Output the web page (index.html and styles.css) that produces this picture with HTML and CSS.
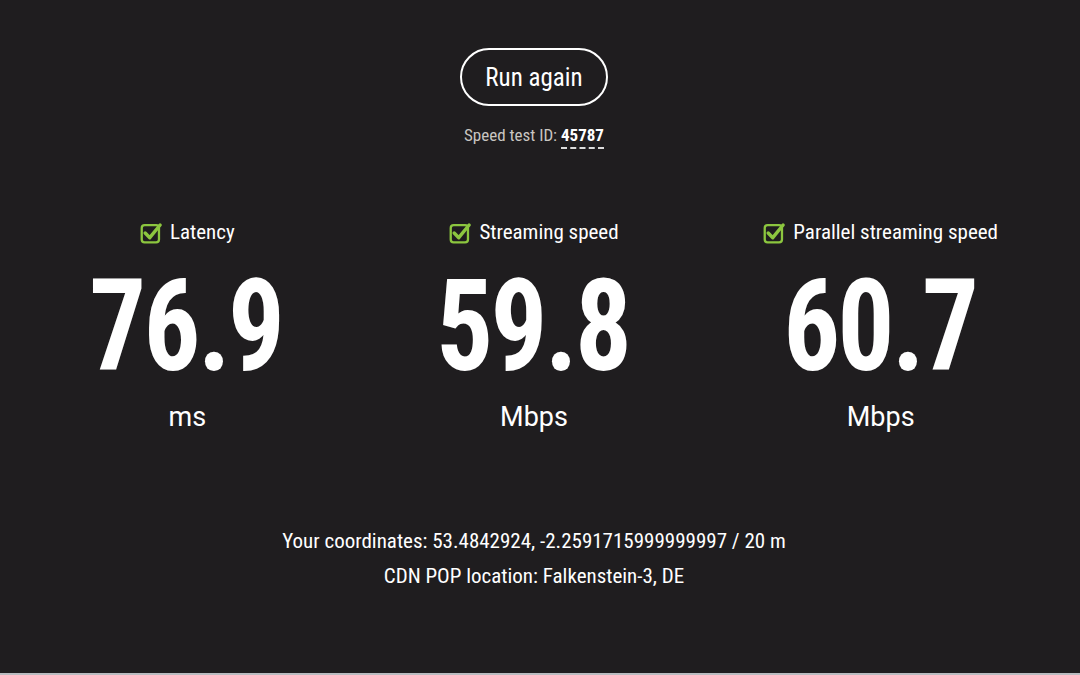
FILE: index.html
```html
<!DOCTYPE html>
<html>
<head>
<meta charset="utf-8">
<link rel="stylesheet" href="styles.css">
</head>
<body>
<main class="page">
  <section class="top">
    <button class="run-btn">Run again</button>
    <p class="test-id">Speed test ID: <span class="id-num">45787</span></p>
  </section>
  <section class="results">
    <div class="metric">
      <div class="label"><svg class="check" viewBox="0 0 20 20"><rect x="1.5" y="3.5" width="15" height="15" rx="2.5" fill="none" stroke="#8cc63f" stroke-width="2"/><path d="M4.5 10.5 L8.5 14.5 L17.5 3.5" fill="none" stroke="#8cc63f" stroke-width="3" stroke-linecap="round" stroke-linejoin="round"/></svg>Latency</div>
      <div class="value">76.9</div>
      <div class="unit">ms</div>
    </div>
    <div class="metric">
      <div class="label"><svg class="check" viewBox="0 0 20 20"><rect x="1.5" y="3.5" width="15" height="15" rx="2.5" fill="none" stroke="#8cc63f" stroke-width="2"/><path d="M4.5 10.5 L8.5 14.5 L17.5 3.5" fill="none" stroke="#8cc63f" stroke-width="3" stroke-linecap="round" stroke-linejoin="round"/></svg>Streaming speed</div>
      <div class="value">59.8</div>
      <div class="unit">Mbps</div>
    </div>
    <div class="metric">
      <div class="label"><svg class="check" viewBox="0 0 20 20"><rect x="1.5" y="3.5" width="15" height="15" rx="2.5" fill="none" stroke="#8cc63f" stroke-width="2"/><path d="M4.5 10.5 L8.5 14.5 L17.5 3.5" fill="none" stroke="#8cc63f" stroke-width="3" stroke-linecap="round" stroke-linejoin="round"/></svg>Parallel streaming speed</div>
      <div class="value">60.7</div>
      <div class="unit">Mbps</div>
    </div>
  </section>
  <section class="info">
    <p>Your coordinates: 53.4842924, -2.2591715999999997 / 20 m</p>
    <p>CDN POP location: Falkenstein-3, DE</p>
  </section>
</main>
</body>
</html>
```

FILE: styles.css
```css
html, body {
  margin: 0;
  padding: 0;
  background: #1f1d1f;
}
body {
  height: 675px;
  overflow: hidden;
  border-bottom: 2px solid #b9bcc0;
  box-sizing: border-box;
  font-family: "Roboto Condensed", "Liberation Sans Narrow", Roboto, sans-serif;
  color: #ffffff;
}
.page {
  width: 1040px;
  padding-left: 14px;
  display: flex;
  flex-direction: column;
  align-items: stretch;
}
.top {
  display: flex;
  flex-direction: column;
  align-items: center;
  padding-top: 48px;
}
.run-btn {
  width: 148px;
  height: 58px;
  border: 2px solid #ffffff;
  border-radius: 29px;
  background: transparent;
  color: #ffffff;
  font-family: inherit;
  font-size: 25px;
  font-weight: 400;
  padding: 0;
  cursor: pointer;
}
.test-id {
  margin: 18px 0 0;
  font-size: 17px;
  color: #c9c6c2;
  line-height: 22px;
}
.id-num {
  color: #ffffff;
  font-weight: 700;
  border-bottom: 2px dashed #dcdcdc;
  padding-bottom: 2px;
}
.results {
  display: grid;
  grid-template-columns: repeat(3, 1fr);
  margin-top: 73px;
}
.metric {
  display: flex;
  flex-direction: column;
  align-items: center;
}
.label {
  display: flex;
  align-items: center;
  gap: 7px;
  font-size: 21px;
  font-weight: 400;
  line-height: 26px;
}
.check {
  width: 23px;
  height: 23px;
}
.value {
  font-size: 128px;
  font-weight: 700;
  line-height: 140px;
  margin-top: 11px;
  letter-spacing: -3px;
  padding-right: 3px;
  transform: scaleX(0.88);
}
.unit {
  font-family: Roboto, "Liberation Sans", sans-serif;
  font-size: 27px;
  line-height: 34px;
  margin-top: 4px;
}
.info {
  margin-top: 90px;
  display: flex;
  flex-direction: column;
  align-items: center;
}
.info p {
  margin: 0;
  font-size: 21px;
  line-height: 35px;
}
```
